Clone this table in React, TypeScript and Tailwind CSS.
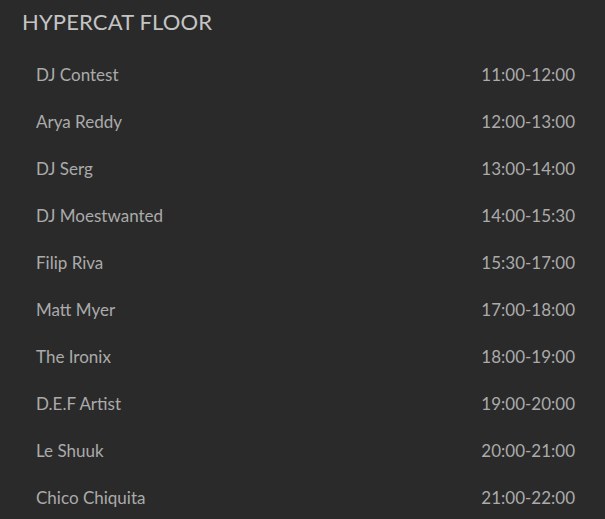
const slots = [
  { name: "DJ Contest", time: "11:00-12:00" },
  { name: "Arya Reddy", time: "12:00-13:00" },
  { name: "DJ Serg", time: "13:00-14:00" },
  { name: "DJ Moestwanted", time: "14:00-15:30" },
  { name: "Filip Riva", time: "15:30-17:00" },
  { name: "Matt Myer", time: "17:00-18:00" },
  { name: "The Ironix", time: "18:00-19:00" },
  { name: "D.E.F Artist", time: "19:00-20:00" },
  { name: "Le Shuuk", time: "20:00-21:00" },
  { name: "Chico Chiquita", time: "21:00-22:00" },
];

export default function App() {
  return (
    <div className="min-h-screen w-full bg-[#2a2a2a] font-['Lato','Open_Sans',sans-serif]">
      <div className="pl-[22px] pr-[30px]">
        <h2 className="pt-[9px] pb-[16px] text-[22px] leading-[26px] tracking-[0.15px] text-[#c4c4c4]">HYPERCAT FLOOR</h2>
        <ul>
          {slots.map((s) => (
            <li key={s.name} className="flex h-[47px] items-center justify-between pl-[14px] text-[17px] text-[#ababab]">
              <span>{s.name}</span>
              <span>{s.time}</span>
            </li>
          ))}
        </ul>
      </div>
    </div>
  );
}
